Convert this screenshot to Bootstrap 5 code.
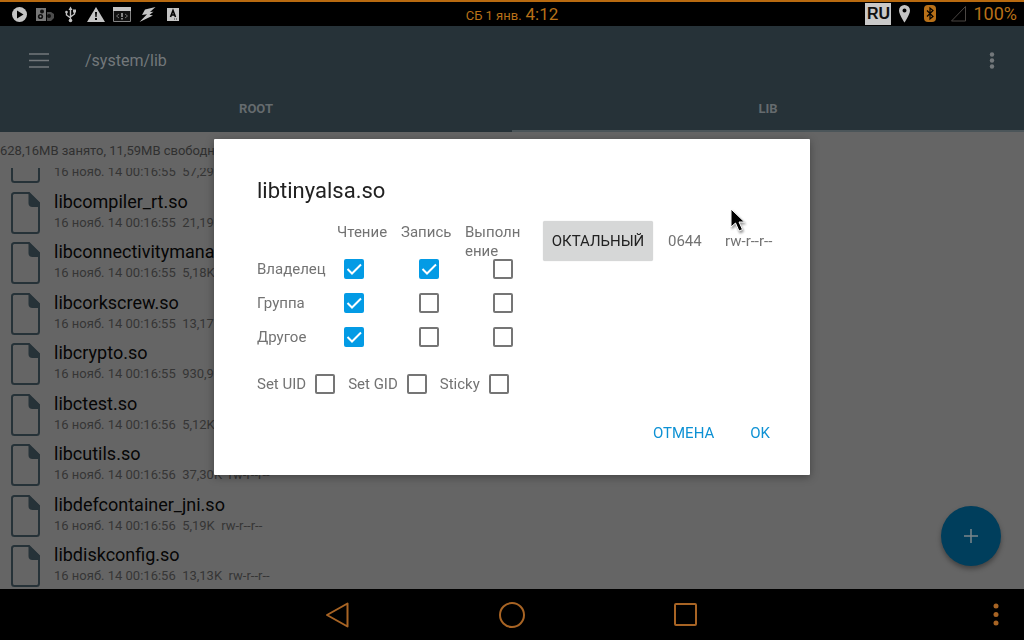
<!DOCTYPE html>
<html lang="ru">
<head>
<meta charset="utf-8">
<meta name="viewport" content="width=device-width, initial-scale=1">
<title>/system/lib</title>
<link href="https://cdn.jsdelivr.net/npm/bootstrap@5.3.0/dist/css/bootstrap.min.css" rel="stylesheet">
<style>
  :root { --ink-orange: #b87018; --bar: #263238; --surface: #656565; --muted-dark: #353535; --accent: #039be5; --body-grey: #737373; }
  body { font-family: Roboto, "Noto Sans", sans-serif; background: var(--surface); }
  button { font-family: inherit; }
  .status-bar { height: 26px; background: #000; border-top: 2px solid #b86a10; color: var(--ink-orange); }
  .status-icons { gap: 8px; padding-left: 11px; color: #c4c4c4; }
  .status-right { padding-right: 7px; }
  .status-date { font-size: 13px; }
  .status-time { font-size: 17px; line-height: 24px; }
  .status-battery { font-size: 18px; line-height: 24px; margin-left: 6px; }
  .lang-tag { width: 26px; height: 22px; font: 700 16px/22px "Liberation Sans", sans-serif; color: #111; background: #c9c9c9; text-align: center; }
  .gap-before { margin-left: 14px; }
  .app-bar { background: var(--bar); color: #73787b; }
  .tool-row { height: 68px; padding: 2px 20px 0 24px; }
  .path-title { font-size: 16px; margin-left: 31px; }
  .plain-btn { background: none; border: 0; padding: 0; color: inherit; display: flex; align-items: center; justify-content: center; }
  .tab-link { font-size: 13px; font-weight: 700; line-height: 30px; height: 38px; color: #656b6e; border-bottom: 2px solid transparent; text-decoration: none; }
  .tab-link.active { border-color: #4b5559; }
  .storage-line { font-size: 13px; line-height: 38px; height: 36px; color: #303030; }
  .file-row { flex: 1 0 0; min-height: 0; padding-left: 11px; gap: 14px; display: flex; align-items: flex-end; overflow: hidden; }
  .file-row.cut { flex: 0 0 17px; }
  .file-row svg { flex: none; margin-bottom: 2px; }
  .file-name { font-size: 18px; line-height: 24px; color: #060606; }
  .file-meta { font-size: 13px; line-height: 18px; color: var(--muted-dark); margin-bottom: 4px; white-space: pre; }
  .add-btn { position: absolute; right: 23px; bottom: 23px; width: 60px; height: 60px; border-radius: 50%; border: 0; background: #003e5c; color: #7c868b; box-shadow: 0 3px 5px rgba(0,0,0,.35); display: flex; align-items: center; justify-content: center; }
  .nav-strip { height: 51px; background: #000; color: #a86424; }
  .nav-keys { gap: 147px; }
  .perm-layer { padding: 25px 16px 51px; }
  .perm-dialog { max-width: 596px; }
  .perm-dialog .modal-content { border: 0; border-radius: 1px; box-shadow: 0 2px 8px rgba(0,0,0,.35); color: var(--body-grey); font-size: 15px; line-height: 19px; }
  .perm-body { padding: 36px 24px 23px 43px; }
  .perm-title { font-size: 22px; line-height: 32px; color: #212121; font-weight: 400; margin: 0 0 14px; }
  .perm-table { table-layout: fixed; width: 268px; border-collapse: collapse; flex: none; }
  .perm-table th { font-weight: 400; padding: 0; text-align: left; }
  .perm-table td { padding: 0; }
  .perm-table thead div { height: 31px; width: 60px; word-break: break-all; padding-top: 2px; overflow: visible; }
  .perm-table tbody tr { height: 34px; }
  .perm-table .in-read { padding-left: 7px; }
  .perm-table .in-write { padding-left: 18px; }
  .perm-table .in-exec { padding-left: 28px; }
  .perm-body .form-check-input { display: block; width: 20px; height: 20px; margin: 0; border: 2px solid #757575; border-radius: 2px; background-color: #fff; flex: none; float: none; }
  .perm-body .form-check-input:checked { background-color: var(--accent); border-color: var(--accent); background-size: 20px; background-image: url("data:image/svg+xml,%3csvg xmlns='http://www.w3.org/2000/svg' viewBox='0 0 20 20'%3e%3cpath fill='none' stroke='%23fff' stroke-width='2' d='M3.500 10l4.500 4.500 9-9'/%3e%3c/svg%3e"); }
  .octal-btn { width: 110px; height: 40px; border: 0; border-radius: 2px; background: #d6d7d7; color: #212121; font-size: 15px; padding: 0; box-shadow: 0 0 1px rgba(0,0,0,.2); }
  .octal-row { padding-left: 18px; }
  .mode-num { width: 57px; margin-left: 15px; }
  .flag-row { margin-top: 20px; gap: 13px; }
  .flag-row label { margin-right: 9px; }
  .act-row { margin-top: 20px; gap: 4px; }
  .act-btn { border: 0; background: none; color: #0d91d4; font-size: 15px; height: 38px; padding: 0 16px; }
  .pointer-mark { position: absolute; left: 516px; top: 68px; }
  .pointer-mark path { filter: drop-shadow(1px 2px 1px rgba(0,0,0,.4)); }
</style>
</head>
<body>
<div class="d-flex flex-column vh-100 overflow-hidden">
  <header class="status-bar d-flex align-items-center flex-shrink-0">
    <div class="status-icons d-flex align-items-center flex-fill w-25">
      <svg width="17" height="17" viewBox="0 0 17 17"><circle cx="8.500" cy="8.500" r="7.500" fill="currentColor"/><path d="M6 4.500v8l6.500-4z" fill="#000"/></svg>
      <svg width="18" height="17" viewBox="0 0 18 17"><path d="M0 2h10v13H0z" fill="#777"/><path d="M11 6h4l3 2v4l-3 3h-4z" fill="#4c4c4c"/><circle cx="6" cy="5.500" r="2" fill="#111"/><circle cx="4.500" cy="10.500" r="2.600" fill="#111"/><circle cx="4.500" cy="10.500" r="1" fill="#888"/><circle cx="13" cy="10" r="2" fill="#111"/></svg>
      <svg width="17" height="17" viewBox="0 0 17 17" fill="none" stroke="currentColor" stroke-width="1.400"><path d="M8.500 3v11M8.500 12l-4-3V6M8.500 11l4-3V5"/><path d="M6.500 4l2-3.500 2 3.500z" fill="currentColor" stroke="none"/><circle cx="8.500" cy="14.500" r="1.800" fill="currentColor" stroke="none"/><circle cx="4.500" cy="6" r="1.300" fill="currentColor" stroke="none"/><path d="M11 3.500h3v3h-3z" fill="currentColor" stroke="none"/></svg>
      <svg width="18" height="17" viewBox="0 0 18 17"><path d="M9 1l9 15H0z" fill="currentColor"/><path d="M8 6h2l-.4 5H8.400zM8 12h2v2H8z" fill="#000"/></svg>
      <svg width="18" height="15" viewBox="0 0 18 15"><path d="M.5.500h17v14H.5z" fill="#111" stroke="#858585"/><path d="M0 0h18v4H0z" fill="currentColor"/><path d="M6 7L3.500 9 6 11M12 7l2.500 2-2.500 2" fill="none" stroke="#707070"/><path d="M8 6h2v4H8zM8 11h2v1.500H8z" fill="#858585"/></svg>
      <svg width="17" height="17" viewBox="0 0 17 17"><path d="M16.500 1L6 3.500 3 9l5-.8L.5 16 14 9.500l-3.500-.8 4-3-3.500.3z" fill="currentColor"/></svg>
      <svg width="18" height="15" viewBox="0 0 18 15"><path d="M3 1h12v13H3z" fill="currentColor"/><path d="M6.500 10L9 3.500l2.500 6.500M7.500 8h3" fill="none" stroke="#000" stroke-width="1.600"/><path d="M10 12h1M12 12h1" stroke="#333"/></svg>
    </div>
    <div class="text-nowrap"><span class="status-date">СБ 1 янв.</span> <span class="status-time">4:12</span></div>
    <div class="status-right d-flex align-items-center justify-content-end flex-fill w-25">
      <span class="lang-tag">RU</span>
      <svg class="ms-2" width="11" height="18" viewBox="0 0 11 18"><path d="M5.500 0A5.500 5.500 0 000 5.500C0 9.500 5.500 17.500 5.500 17.500S11 9.500 11 5.500A5.500 5.500 0 005.500 0zm0 3.500a2 2 0 110 4 2 2 0 010-4z" fill="#c4c4c4" fill-rule="evenodd"/></svg>
      <svg class="gap-before" width="12" height="18" viewBox="0 0 12 18"><rect width="12" height="17" rx="4" fill="currentColor"/><path d="M3 5.500l6 6-3 2.500V3l3 2.500-6 6" fill="none" stroke="#000" stroke-width="1.200"/></svg>
      <svg class="gap-before" width="17" height="18" viewBox="0 0 17 18"><path d="M15.500 1.500v14.500H1.500z" fill="none" stroke="#4a4643"/></svg>
      <span class="status-battery">100%</span>
    </div>
  </header>

  <div class="app-bar flex-shrink-0">
    <div class="tool-row d-flex align-items-center">
      <button type="button" class="plain-btn" aria-label="Меню"><svg width="30" height="24" viewBox="0 0 30 24"><path d="M5 5h20M5 11.500h20M5 18h20" stroke="currentColor" stroke-width="1.700"/></svg></button>
      <span class="path-title">/system/lib</span>
      <button type="button" class="plain-btn ms-auto" aria-label="Ещё"><svg width="24" height="24" viewBox="0 0 24 24" fill="currentColor"><circle cx="12" cy="5.500" r="2.200"/><circle cx="12" cy="11.500" r="2.200"/><circle cx="12" cy="17.500" r="2.200"/></svg></button>
    </div>
    <nav class="d-flex text-center">
      <a href="#" class="tab-link w-50">ROOT</a>
      <a href="#" class="tab-link active w-50">LIB</a>
    </nav>
  </div>

  <main class="d-flex flex-column flex-fill position-relative overflow-hidden">
    <div class="storage-line text-nowrap flex-shrink-0">628,16MB занято, 11,59MB свободно</div>
    <svg width="0" height="0" class="position-absolute"><symbol id="doc" viewBox="0 0 29 42"><path d="M3 1h15l10 10v27.500a2.500 2.500 0 01-2.500 2.500h-22A2.500 2.500 0 011 38.500v-35A2.500 2.500 0 013 1z" fill="none" stroke="#263238" stroke-width="2"/><path d="M17.500 0l11.500 11v4h-7.500a4 4 0 01-4-4z" fill="#263238"/></symbol></svg>
    <div class="d-flex flex-column flex-fill overflow-hidden">
      <div class="file-row cut"><svg width="29" height="42"><use href="#doc"/></svg><div><div class="file-meta">16 нояб. 14 00:16:55  57,29K  rw-r--r--</div></div></div>
      <div class="file-row"><svg width="29" height="42"><use href="#doc"/></svg><div><div class="file-name">libcompiler_rt.so</div><div class="file-meta">16 нояб. 14 00:16:55  21,19K  rw-r--r--</div></div></div>
      <div class="file-row"><svg width="29" height="42"><use href="#doc"/></svg><div><div class="file-name">libconnectivitymanager.so</div><div class="file-meta">16 нояб. 14 00:16:55  5,18K  rw-r--r--</div></div></div>
      <div class="file-row"><svg width="29" height="42"><use href="#doc"/></svg><div><div class="file-name">libcorkscrew.so</div><div class="file-meta">16 нояб. 14 00:16:55  13,17K  rw-r--r--</div></div></div>
      <div class="file-row"><svg width="29" height="42"><use href="#doc"/></svg><div><div class="file-name">libcrypto.so</div><div class="file-meta">16 нояб. 14 00:16:55  930,98K  rw-r--r--</div></div></div>
      <div class="file-row"><svg width="29" height="42"><use href="#doc"/></svg><div><div class="file-name">libctest.so</div><div class="file-meta">16 нояб. 14 00:16:56  5,12K  rw-r--r--</div></div></div>
      <div class="file-row"><svg width="29" height="42"><use href="#doc"/></svg><div><div class="file-name">libcutils.so</div><div class="file-meta">16 нояб. 14 00:16:56  37,30K  rw-r--r--</div></div></div>
      <div class="file-row"><svg width="29" height="42"><use href="#doc"/></svg><div><div class="file-name">libdefcontainer_jni.so</div><div class="file-meta">16 нояб. 14 00:16:56  5,19K  rw-r--r--</div></div></div>
      <div class="file-row"><svg width="29" height="42"><use href="#doc"/></svg><div><div class="file-name">libdiskconfig.so</div><div class="file-meta">16 нояб. 14 00:16:56  13,13K  rw-r--r--</div></div></div>
    </div>
    <button type="button" class="add-btn" aria-label="Добавить"><svg width="16" height="16" viewBox="0 0 16 16"><path d="M8 1v14M1 8h14" stroke="currentColor" stroke-width="1.500"/></svg></button>
  </main>

  <footer class="nav-strip position-relative d-flex align-items-center justify-content-center flex-shrink-0">
    <div class="d-flex align-items-center justify-content-center nav-keys">
      <button type="button" class="plain-btn" aria-label="Назад"><svg width="26" height="28" viewBox="0 0 26 28"><path d="M22.500 2.500v23L2 14z" fill="none" stroke="currentColor" stroke-width="2" stroke-linejoin="round"/></svg></button>
      <button type="button" class="plain-btn" aria-label="Домой"><svg width="28" height="28" viewBox="0 0 28 28"><circle cx="14" cy="14" r="12" fill="none" stroke="currentColor" stroke-width="2"/></svg></button>
      <button type="button" class="plain-btn" aria-label="Недавние"><svg width="26" height="28" viewBox="0 0 26 28"><rect x="2" y="3" width="21" height="21" rx="1" fill="none" stroke="currentColor" stroke-width="2"/></svg></button>
    </div>
    <button type="button" class="plain-btn position-absolute end-0 me-3" aria-label="Опции"><svg width="24" height="28" viewBox="0 0 24 28" fill="currentColor"><circle cx="12" cy="5" r="2.500"/><circle cx="12" cy="13.500" r="2.500"/><circle cx="12" cy="22" r="2.500"/></svg></button>
  </footer>
</div>

<div class="modal d-flex align-items-center justify-content-center perm-layer" role="dialog" aria-labelledby="permTitle">
  <div class="perm-dialog w-100">
    <div class="modal-content">
      <form class="perm-body">
        <h1 class="perm-title" id="permTitle">libtinyalsa.so</h1>
        <div class="d-flex align-items-start">
          <table class="perm-table">
            <colgroup><col style="width:80px"><col style="width:64px"><col style="width:64px"><col style="width:60px"></colgroup>
            <thead><tr><td></td><th scope="col"><div>Чтение</div></th><th scope="col"><div>Запись</div></th><th scope="col"><div>Выполн<wbr>ение</div></th></tr></thead>
            <tbody>
              <tr><th scope="row">Владелец</th><td class="in-read"><input class="form-check-input" type="checkbox" aria-label="Владелец чтение" checked></td><td class="in-write"><input class="form-check-input" type="checkbox" aria-label="Владелец запись" checked></td><td class="in-exec"><input class="form-check-input" type="checkbox" aria-label="Владелец выполнение"></td></tr>
              <tr><th scope="row">Группа</th><td class="in-read"><input class="form-check-input" type="checkbox" aria-label="Группа чтение" checked></td><td class="in-write"><input class="form-check-input" type="checkbox" aria-label="Группа запись"></td><td class="in-exec"><input class="form-check-input" type="checkbox" aria-label="Группа выполнение"></td></tr>
              <tr><th scope="row">Другое</th><td class="in-read"><input class="form-check-input" type="checkbox" aria-label="Другое чтение" checked></td><td class="in-write"><input class="form-check-input" type="checkbox" aria-label="Другое запись"></td><td class="in-exec"><input class="form-check-input" type="checkbox" aria-label="Другое выполнение"></td></tr>
            </tbody>
          </table>
          <div class="octal-row d-flex align-items-center text-nowrap">
            <button type="button" class="octal-btn">ОКТАЛЬНЫЙ</button>
            <span class="mode-num">0644</span>
            <span>rw-r--r--</span>
          </div>
        </div>
        <div class="flag-row d-flex">
          <div class="d-flex align-items-center"><label for="suid">Set UID</label><input class="form-check-input" type="checkbox" id="suid"></div>
          <div class="d-flex align-items-center"><label for="sgid">Set GID</label><input class="form-check-input" type="checkbox" id="sgid"></div>
          <div class="d-flex align-items-center"><label for="sticky">Sticky</label><input class="form-check-input" type="checkbox" id="sticky"></div>
        </div>
        <div class="act-row d-flex justify-content-end">
          <button type="button" class="act-btn">ОТМЕНА</button>
          <button type="button" class="act-btn">OK</button>
        </div>
      </form>
      <svg class="pointer-mark" width="20" height="28" viewBox="0 0 20 28"><path d="M1 2v18l4.500-4 3.500 8 3.500-1.500-3.500-7.500h5.500z" fill="#000" stroke="#fff"/></svg>
    </div>
  </div>
</div>
<script src="https://cdn.jsdelivr.net/npm/bootstrap@5.3.0/dist/js/bootstrap.bundle.min.js"></script>
</body>
</html>
